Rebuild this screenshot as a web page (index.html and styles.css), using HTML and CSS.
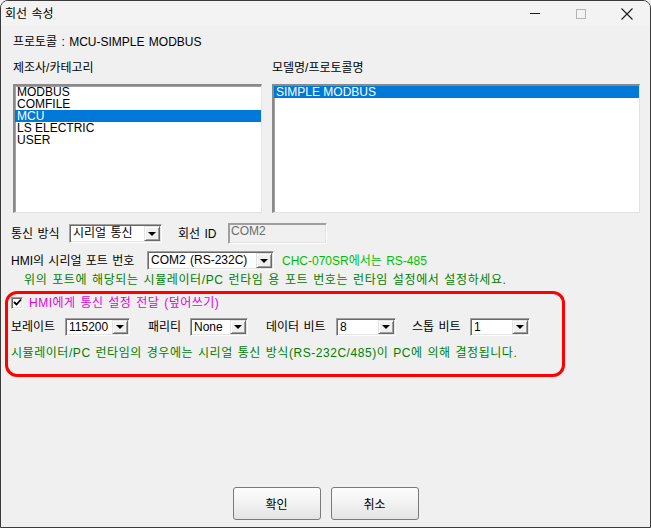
FILE: index.html
```html
<!DOCTYPE html>
<html lang="ko">
<head>
<meta charset="utf-8">
<title>회선 속성</title>
<link rel="stylesheet" href="styles.css">
</head>
<body>
<div class="window">
  <div class="titlebar">
    <span class="title">회선 속성</span>
    <div class="caption-btns">
      <span class="cap"><span class="min-icon"></span></span>
      <span class="cap"><span class="max-icon"></span></span>
      <span class="cap">
        <svg class="close-icon" width="12" height="12" viewBox="0 0 12 12"><path d="M0.5 0.5 L11.5 11.5 M11.5 0.5 L0.5 11.5" stroke="#1b1b1b" stroke-width="1.1" fill="none"/></svg>
      </span>
    </div>
  </div>

  <div class="content">
    <div class="protocol">프로토콜 : MCU-SIMPLE MODBUS</div>

    <div class="lists">
      <div class="col col-left">
        <div class="label">제조사/카테고리</div>
        <div class="listbox">
          <div class="item">MODBUS</div>
          <div class="item">COMFILE</div>
          <div class="item selected">MCU</div>
          <div class="item">LS ELECTRIC</div>
          <div class="item">USER</div>
        </div>
      </div>
      <div class="col col-right">
        <div class="label">모델명/프로토콜명</div>
        <div class="listbox">
          <div class="item selected">SIMPLE MODBUS</div>
        </div>
      </div>
    </div>

    <div class="row row-comm">
      <span class="lbl lbl-comm">통신 방식</span>
      <div class="combo combo-comm"><span class="val">시리얼 통신</span><span class="drop"><span class="arrow"></span></span></div>
      <span class="lbl lbl-id">회선 ID</span>
      <div class="textbox">COM2</div>
    </div>

    <div class="row row-port">
      <span class="lbl lbl-port">HMI의 시리얼 포트 번호</span>
      <div class="combo combo-port"><span class="val">COM2 (RS-232C)</span><span class="drop"><span class="arrow"></span></span></div>
      <span class="hint-bright">CHC-070SR에서는 RS-485</span>
    </div>

    <div class="note">위의 포트에 해당되는 시뮬레이터/PC 런타임 용 포트 번호는 런타임 설정에서 설정하세요.</div>

    <div class="redbox">
      <div class="check-row">
        <span class="checkbox">
          <svg width="9" height="9" viewBox="0 0 9 9"><path d="M1 4 L3.5 6.5 L8 1.5" stroke="#000" stroke-width="1.8" fill="none"/></svg>
        </span>
        <span class="magenta">HMI에게 통신 설정 전달 (덮어쓰기)</span>
      </div>
      <div class="row serial-row">
        <span class="lbl lbl-baud">보레이트</span>
        <div class="combo combo-baud"><span class="val">115200</span><span class="drop"><span class="arrow"></span></span></div>
        <span class="lbl lbl-parity">패리티</span>
        <div class="combo combo-parity"><span class="val">None</span><span class="drop"><span class="arrow"></span></span></div>
        <span class="lbl lbl-data">데이터 비트</span>
        <div class="combo combo-small"><span class="val">8</span><span class="drop"><span class="arrow"></span></span></div>
        <span class="lbl lbl-stop">스톱 비트</span>
        <div class="combo combo-small"><span class="val">1</span><span class="drop"><span class="arrow"></span></span></div>
      </div>
      <div class="note2">시뮬레이터/PC 런타임의 경우에는 시리얼 통신 방식(RS-232C/485)이 PC에 의해 결정됩니다.</div>
    </div>

    <div class="footer">
      <button class="btn">확인</button>
      <button class="btn">취소</button>
    </div>
  </div>
</div>
</body>
</html>
```

FILE: styles.css
```css
* { box-sizing: border-box; }

html, body {
  margin: 0;
  padding: 0;
  background: #f0f0f0;
}

body {
  font-family: "Liberation Sans", "Noto Sans CJK KR", sans-serif;
  font-size: 12px;
  color: #000;
  line-height: 16px;
  word-spacing: 1px;
}

.window {
  width: 651px;
  height: 528px;
  border: 1px solid #3a3a3a;
  border-radius: 8px 8px 0 0;
  background: #f0f0f0;
  display: flex;
  flex-direction: column;
  overflow: hidden;
}

.titlebar {
  height: 25px;
  flex: none;
  background: #f3f3f3;
  display: flex;
  align-items: center;
  justify-content: space-between;
}

.title {
  padding-left: 4px;
  font-size: 12px;
  color: #000;
}

.caption-btns {
  display: flex;
  height: 25px;
}

.cap {
  width: 46px;
  height: 25px;
  display: flex;
  align-items: center;
  justify-content: center;
}

.min-icon {
  width: 10px;
  height: 1px;
  background: #1b1b1b;
}

.max-icon {
  width: 10px;
  height: 10px;
  border: 1px solid #b4b4b4;
}

.close-icon { display: block; }

.content {
  flex: 1;
  display: flex;
  flex-direction: column;
  padding: 0 0 7px 10px;
}

.protocol {
  margin-top: 8px;
  padding-left: 2px;
  height: 16px;
}

.lists {
  margin-top: 10px;
  display: flex;
  padding-left: 2px;
  gap: 10px;
}

.col { display: flex; flex-direction: column; }
.col-left { width: 249px; }
.col-right { width: 368px; }

.label { height: 16px; }

.listbox {
  margin-top: 8px;
  height: 129px;
  background: #fff;
  border-style: solid;
  border-width: 2px 1px 1px 2px;
  border-color: #8a8a8a #e3e3e3 #e3e3e3 #8a8a8a;
  box-shadow: inset 1px 1px 0 #a0a0a0;
  font-family: "Liberation Sans", sans-serif;
  font-size: 12px;
  line-height: 12px;
  word-spacing: 0;
}

.item {
  height: 12px;
  padding-left: 2px;
  white-space: nowrap;
}

.item.selected {
  background: #0078d7;
  color: #fff;
}

.row {
  display: flex;
  align-items: center;
}

.row-comm { margin-top: 10px; height: 21px; }
.row-port { margin-top: 7px; height: 19px; }

.lbl { flex: none; white-space: nowrap; }
.lbl-comm { width: 58px; }
.lbl-id { margin-left: 16px; width: 50px; }
.lbl-port { width: 136px; }

.combo {
  flex: none;
  height: 19px;
  display: flex;
  align-items: stretch;
  background: #fff;
  border-style: solid;
  border-width: 1px;
  border-color: #a0a0a0 #fff #fff #a0a0a0;
  box-shadow: inset 1px 1px 0 #696969, inset -1px -1px 0 #e3e3e3;
  padding: 1px;
}

.combo .val {
  flex: 1;
  padding-left: 2px;
  line-height: 15px;
  white-space: nowrap;
}

.drop {
  width: 16px;
  flex: none;
  background: #f0f0f0;
  border-style: solid;
  border-width: 1px;
  border-color: #e3e3e3 #696969 #696969 #e3e3e3;
  box-shadow: inset 1px 1px 0 #fff, inset -1px -1px 0 #a0a0a0;
  display: flex;
  align-items: center;
  justify-content: center;
}

.arrow {
  width: 0;
  height: 0;
  border-left: 4px solid transparent;
  border-right: 4px solid transparent;
  border-top: 4px solid #000;
}

.combo-comm { width: 93px; }
.combo-port { width: 127px; }

.textbox {
  width: 99px;
  height: 21px;
  background: #f0f0f0;
  border-style: solid;
  border-width: 1px;
  border-color: #a0a0a0 #fff #fff #a0a0a0;
  box-shadow: inset 1px 1px 0 #a0a0a0, inset -1px -1px 0 #e3e3e3;
  color: #6d6d6d;
  padding-left: 2px;
  line-height: 15px;
}

.hint-bright {
  margin-left: 8px;
  color: #00c000;
  white-space: nowrap;
}

.note {
  margin-top: 2px;
  padding-left: 13px;
  height: 16px;
  color: #008000;
  white-space: nowrap;
  letter-spacing: 0.6px;
}

.redbox {
  margin-top: 3px;
  margin-left: -6px;
  width: 560px;
  height: 86px;
  border: 3px solid #ff0000;
  border-radius: 12px;
  padding: 2px 0 0 3px;
  display: flex;
  flex-direction: column;
}

.check-row {
  height: 13px;
  display: flex;
  align-items: center;
}

.checkbox {
  width: 12px;
  height: 12px;
  flex: none;
  background: #fff;
  border-style: solid;
  border-width: 1px;
  border-color: #a0a0a0 #fff #fff #a0a0a0;
  box-shadow: inset 1px 1px 0 #696969, inset -1px -1px 0 #e3e3e3;
  display: flex;
  align-items: center;
  justify-content: center;
}

.checkbox svg { display: block; }

.magenta {
  margin-left: 6px;
  color: #e000e0;
  white-space: nowrap;
  letter-spacing: 0.5px;
}

.serial-row { margin-top: 9px; height: 18px; }
.serial-row .combo { height: 18px; }
.serial-row .combo .val { line-height: 14px; }

.lbl-baud { width: 54px; }
.combo-baud { width: 65px; }
.lbl-parity { margin-left: 18px; width: 42px; }
.combo-parity { width: 58px; }
.lbl-data { margin-left: 18px; width: 70px; }
.combo-small { width: 60px; }
.lbl-stop { margin-left: 16px; width: 58px; }

.note2 {
  margin-top: 9px;
  height: 16px;
  color: #008000;
  white-space: nowrap;
  letter-spacing: 0.55px;
}

.footer {
  margin-top: auto;
  margin-left: -10px;
  display: flex;
  justify-content: center;
  gap: 10px;
}

.btn {
  width: 88px;
  height: 33px;
  font-family: "Liberation Sans", "Noto Sans CJK KR", sans-serif;
  font-size: 12px;
  color: #000;
  border: 1px solid #7a7a7a;
  border-radius: 3px;
  background: linear-gradient(to bottom, #fdfdfd 0%, #f3f3f3 45%, #e3e3e3 100%);
  padding: 0;
}
```
